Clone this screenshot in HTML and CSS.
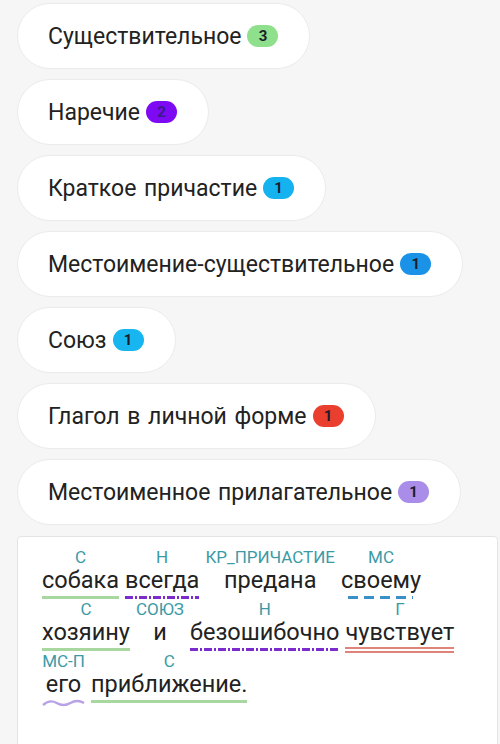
FILE: index.html
```html
<!DOCTYPE html>
<html lang="ru">
<head>
<meta charset="UTF-8" />
<meta name="viewport" content="width=device-width, initial-scale=1.0"/>
<title>Разбор по частям речи</title>
<link rel="stylesheet" href="styles.css">
</head>
<body>

<!-- Список частей речи -->
<div class="tags">
  <div class="tag">Существительное <span class="badge b-noun">3</span></div>
  <div class="tag">Наречие <span class="badge b-adv">2</span></div>
  <div class="tag">Краткое причастие <span class="badge b-part">1</span></div>
  <div class="tag">Местоимение-существительное <span class="badge b-pron">1</span></div>
  <div class="tag">Союз <span class="badge b-conj">1</span></div>
  <div class="tag">Глагол в личной форме <span class="badge b-verb">1</span></div>
  <div class="tag">Местоименное прилагательное <span class="badge b-padj">1</span></div>
</div>

<!-- Предложение с разметкой -->
<div class="sentence">
  <div class="word"><span class="label">С</span><span class="text">собака</span><span class="line u-noun"></span></div>
  <div class="word"><span class="label">Н</span><span class="text">всегда</span><span class="line u-adv"></span></div>
  <div class="word"><span class="label">КР_ПРИЧАСТИЕ</span><span class="text">предана</span><span class="line"></span></div>
  <div class="word"><span class="label">МС</span><span class="text">своему</span><span class="line u-pron"></span></div>

  <div class="word"><span class="label">С</span><span class="text">хозяину</span><span class="line u-noun"></span></div>
  <div class="word"><span class="label">СОЮЗ</span><span class="text">и</span><span class="line"></span></div>
  <div class="word"><span class="label">Н</span><span class="text">безошибочно</span><span class="line u-adv"></span></div>
  <div class="word"><span class="label">Г</span><span class="text">чувствует</span><span class="line u-verb"></span></div>

  <div class="word"><span class="label">МС-П</span><span class="text">его</span>
    <svg class="line u-wave" viewBox="0 0 44 8" preserveAspectRatio="none"><path d="M1 6 Q8 0 15 4 T29 4 T43 4" fill="none" stroke="#b8a2e6" stroke-width="2.4"/></svg>
  </div>
  <div class="word"><span class="label">С</span><span class="text">приближение.</span><span class="line u-noun"></span></div>
</div>

</body>
</html>
```

FILE: styles.css
```css
/* Общие стили */
* {
  box-sizing: border-box;
  margin: 0;
  padding: 0;
}

body {
  background: #f6f6f6;
  font-family: Roboto, "Liberation Sans", Arial, sans-serif;
  color: #222;
  padding: 3px 0 0 17px;
}

/* Плашки частей речи */
.tags {
  display: flex;
  flex-direction: column;
  align-items: flex-start;
  gap: 10px;
}

.tag {
  display: flex;
  align-items: center;
  height: 66px;
  padding: 0 31px 0 30px;
  background: #fff;
  border: 1px solid #ebebeb;
  border-radius: 33px;
  font-size: 23px;
  word-spacing: 2px;
}

.badge {
  display: inline-flex;
  align-items: center;
  justify-content: center;
  width: 31px;
  height: 22px;
  margin-left: 6px;
  border-radius: 11px;
  font-size: 15px;
  font-weight: bold;
  color: #1d1d2b;
}

.b-noun { background: #8fe08c; }
.b-adv  { background: #7d0af2; color: #3a1a8c; }
.b-part { background: #15b2f0; }
.b-pron { background: #1a92e8; }
.b-conj { background: #17b6f0; }
.b-verb { background: #ea3f2e; }
.b-padj { background: #a98de8; }

/* Карточка с предложением */
.sentence {
  display: flex;
  flex-wrap: wrap;
  column-gap: 6px;
  margin-top: 11px;
  margin-right: 2px;
  padding: 10px 20px 60px 24px;
  min-height: 220px;
  background: #fff;
  border: 1px solid #e4e4e4;
  border-radius: 4px;
}

.word {
  display: flex;
  flex-direction: column;
  align-items: center;
}

.label {
  font-size: 17px;
  line-height: 20px;
  color: #3c9aa6;
}

.text {
  font-size: 23.5px;
  line-height: 27px;
}

.line {
  align-self: stretch;
  height: 3px;
  margin: 2px 0 0;
}

.u-noun { background: #a8d8a0; }

.u-adv {
  background: repeating-linear-gradient(90deg, #7a2ccc 0 8px, transparent 8px 10px, #7a2ccc 10px 12px, transparent 12px 14px);
}

.u-pron {
  margin-left: 7px;
  margin-right: 8px;
  background: repeating-linear-gradient(90deg, #3a8fc6 0 10px, transparent 10px 16px);
}

.u-verb {
  height: 6px;
  margin-top: 1px;
  margin-bottom: -2px;
  border-top: 2px solid #e0837a;
  border-bottom: 2px solid #e0837a;
}

.u-wave {
  width: 43px;
  height: 8px;
  margin: 1px 0 -4px;
  align-self: flex-start;
}
```
